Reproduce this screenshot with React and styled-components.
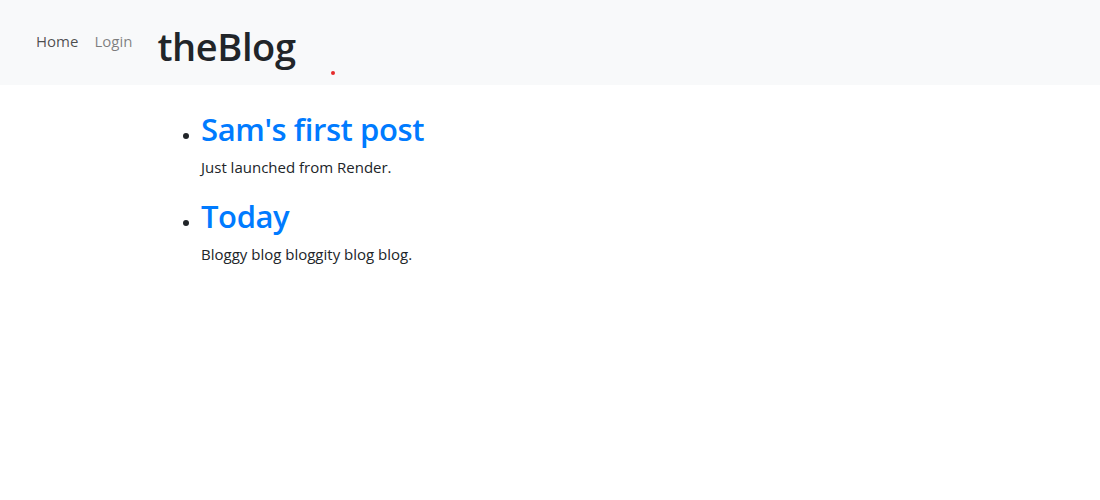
import React from 'react';
import styled, { createGlobalStyle } from 'styled-components';

const GlobalStyle = createGlobalStyle`
  body {
    margin: 0;
    background: #fff;
    color: #212529;
    font-family: "Open Sans", "Noto Sans", sans-serif;
  }
`;

const Navbar = styled.nav`
  display: flex;
  align-items: center;
  height: 85px;
  padding: 0 0 0 28px;
  background-color: #f8f9fa;
  position: relative;
`;

const NavLinks = styled.div`
  display: flex;
  align-items: center;
  margin-top: -3px;
`;

const NavLink = styled.a`
  padding: 0 8px;
  font-size: 15px;
  color: ${props => (props.active ? 'rgba(0, 0, 0, 0.7)' : 'rgba(0, 0, 0, 0.5)')};
  text-decoration: none;
`;

const Brand = styled.h1`
  margin: 6px 0 0 17px;
  font-size: 38px;
  font-weight: 600;
  color: #212529;
  letter-spacing: -0.4px;
`;

const Dot = styled.span`
  position: absolute;
  left: 331px;
  top: 71px;
  width: 4px;
  height: 4px;
  border-radius: 50%;
  background: #e52b2b;
`;

const PostList = styled.ul`
  margin: 0;
  padding: 26px 0 0 201px;
`;

const PostItem = styled.li`
  margin-bottom: 19px;
`;

const PostTitle = styled.h2`
  margin: 0 0 8px;
  font-size: 31px;
  font-weight: 600;
  line-height: 1.2;
  letter-spacing: -0.4px;

  a {
    color: #007bff;
    text-decoration: none;
  }
`;

const PostBody = styled.p`
  margin: 0;
  font-size: 15px;
  line-height: 1.5;
  color: #212529;
`;

const posts = [
  { id: 1, title: "Sam's first post", body: 'Just launched from Render.' },
  { id: 2, title: 'Today', body: 'Bloggy blog bloggity blog blog.' },
];

const App = () => {
  return (
    <>
      <GlobalStyle />
      <Navbar>
        <NavLinks>
          <NavLink href="#" active>Home</NavLink>
          <NavLink href="#">Login</NavLink>
        </NavLinks>
        <Brand>theBlog</Brand>
        <Dot />
      </Navbar>
      <PostList>
        {posts.map((post) => (
          <PostItem key={post.id}>
            <PostTitle><a href="#">{post.title}</a></PostTitle>
            <PostBody>{post.body}</PostBody>
          </PostItem>
        ))}
      </PostList>
    </>
  );
};

export default App;
